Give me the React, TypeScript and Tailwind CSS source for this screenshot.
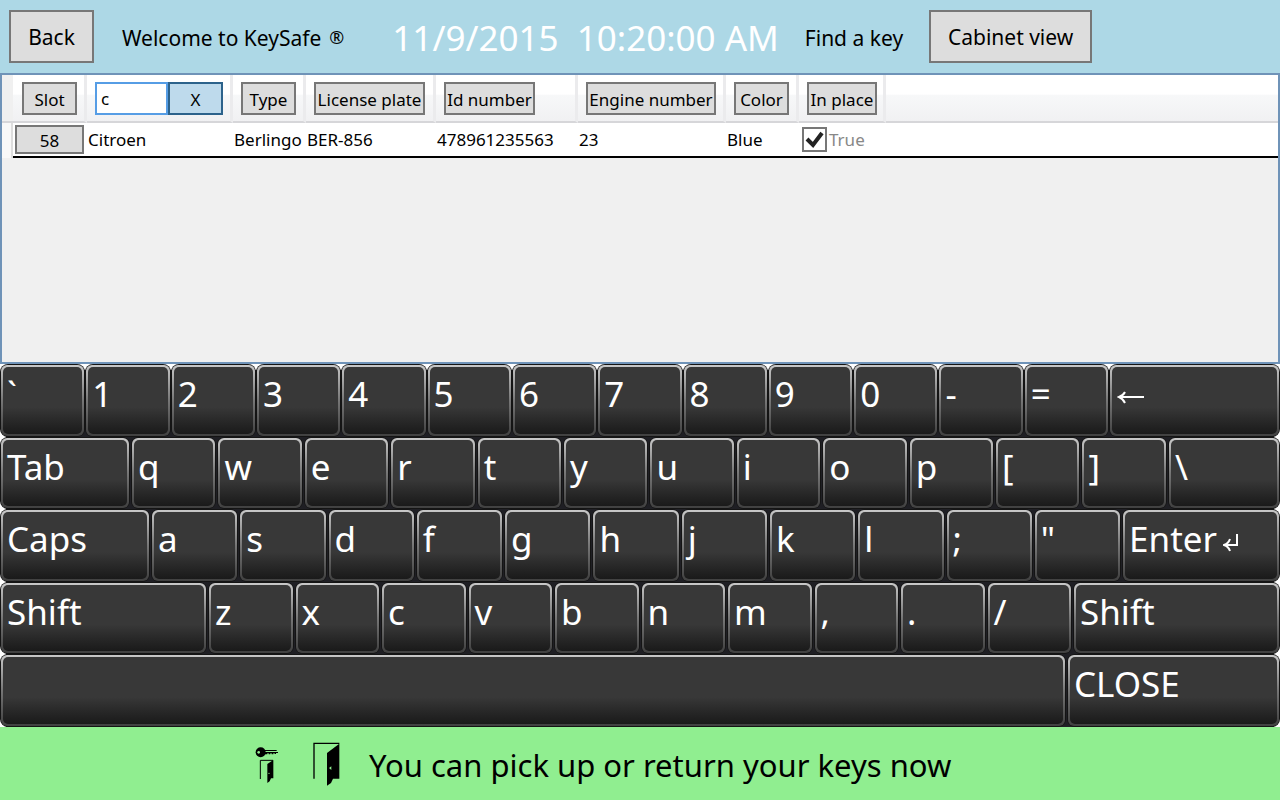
import { useState } from 'react';
import clsx from 'clsx';

const columns = [
	{ title: 'Type', width: 'w-[73px]', button: 'w-[55px]' },
	{ title: 'License plate', width: 'w-[130px]', button: 'w-[111px]' },
	{ title: 'Id number', width: 'w-[142px]', button: 'w-[91px]' },
	{ title: 'Engine number', width: 'w-[148px]', button: 'w-[130px]' },
	{ title: 'Color', width: 'w-[73px]', button: 'w-[55px]' },
	{ title: 'In place', width: 'w-[87px]', button: 'w-[70px]' },
];

const keys = [
	{
		slot: 58,
		name: 'Citroen',
		type: 'Berlingo',
		plate: 'BER-856',
		id: '478961235563',
		engine: '23',
		color: 'Blue',
		inPlace: true,
	},
];

// each key is [label, relative width]
const keyboard: [string, number][][] = [
	[
		...[...'`1234567890-='].map((c): [string, number] => [c, 83.3]),
		['←', 169],
	],
	[
		['Tab', 128],
		...[...'qwertyuiop[]'].map((c): [string, number] => [c, 83.4]),
		['\\', 110],
	],
	[
		['Caps', 148],
		...[...'asdfghjkl;"'].map((c): [string, number] => [c, 85.3]),
		['Enter ↲', 156],
	],
	[
		['Shift', 205],
		...[...'zxcvbnm,./'].map((c): [string, number] => [c, 83.5]),
		['Shift', 205],
	],
	[
		[' ', 1064],
		['CLOSE', 211],
	],
];

const grayButton =
	'border-2 border-[#777] bg-[#ddd] pt-[3px] text-black flex items-center justify-center whitespace-nowrap';

function KeyLabel({ label }: { label: string }) {
	if (label === '←') {
		return (
			<span className="flex pt-6 pl-px">
				<svg viewBox="0 0 28 14" className="h-[14px] w-7" fill="none" stroke="white" strokeWidth="2">
					<path d="M27 6H3" />
					<path d="M8 1C6.500 4 4.500 5 2 6C4.500 7 6.500 9 8 12" />
				</svg>
			</span>
		);
	}
	if (label === 'Enter ↲') {
		return (
			<span className="flex">
				Enter
				<svg viewBox="0 0 16 20" className="mt-[21px] ml-1.5 h-5 w-4" fill="none" stroke="white" strokeWidth="2">
					<path d="M14 1V12H3" />
					<path d="M7 6C6 9 4 11 1 12C4 13 6 15 7 18" />
				</svg>
			</span>
		);
	}
	return <>{label}</>;
}

function Key({ label, size }: { label: string; size: number }) {
	return (
		<button
			type="button"
			aria-label={label === ' ' ? 'Space' : label}
			style={{ flexGrow: size }}
			className="min-w-0 basis-0 rounded-lg bg-[#141414] p-px"
		>
			<span className="block h-full rounded-md bg-linear-to-b from-[#c8c8c8] via-[#777] to-[#404040] p-[2px]">
				<span className="block h-full rounded-[5px] bg-linear-to-b from-[#383838] from-60% to-[#1a1a1a] pl-1 text-left text-[35px] leading-[53px] whitespace-nowrap text-white">
					<KeyLabel label={label} />
				</span>
			</span>
		</button>
	);
}

function KeyDoorIcon() {
	return (
		<svg viewBox="45 48 72 114" className="h-[38px] w-6">
			<circle cx="62" cy="67" r="15" />
			<circle cx="56" cy="67" r="4" fill="#90ee90" />
			<path d="M74 60H110V63H74ZM74 66H114V69H108V72H104V70H100V73H95V70H91V73H86V70H82V73H74Z" />
			<path d="M61 147V91H99" fill="none" stroke="black" strokeWidth="3" />
			<path d="M100 90L82 102V159L89 154L93 145H100Z" />
			<circle cx="87" cy="130" r="2" fill="#90ee90" />
		</svg>
	);
}

function DoorIcon() {
	return (
		<svg viewBox="218 34 81 132" className="h-11 w-[27px]">
			<path d="M221 144V38H297" fill="none" stroke="black" strokeWidth="4" />
			<path d="M297 39L260 67V165L272 157L278 144H297Z" />
			<path d="M273 107V118L266 112Z" fill="#90ee90" />
		</svg>
	);
}

export default function App() {
	const [filter, setFilter] = useState('c');
	const headCell =
		'h-12 border-r-3 border-[#ebebed] pt-px pl-2 text-left font-normal';

	return (
		<div className="flex min-h-screen flex-col bg-[#f0f0f0] font-['Noto_Sans','Open_Sans',sans-serif] text-black">
			<header className="flex h-[73px] items-center bg-[#add8e6] pl-[9px] text-[21px]">
				<button type="button" className={clsx(grayButton, 'h-[53px] w-[85px]')}>
					Back
				</button>
				<span className="ml-7 flex gap-2 pt-1 whitespace-nowrap">
					Welcome to KeySafe <span className="text-lg leading-7">®</span>
				</span>
				<time className="ml-12 pt-1 text-[35px] whitespace-pre text-white">
					11/9/2015  10:20:00 AM
				</time>
				<h1 className="ml-[26px] pt-1 whitespace-nowrap">Find a key</h1>
				<button type="button" className={clsx(grayButton, 'ml-[26px] h-[53px] w-[163px]')}>
					Cabinet view
				</button>
			</header>

			<main className="flex-1 border-2 border-[#6f93b8]">
				<table className="w-full table-fixed border-separate border-spacing-0 text-[17px]">
					<thead className="bg-linear-to-b from-white from-40% via-[#f7f8f9] via-42% to-[#f0f0f2]">
						<tr className="[&>th]:border-b-2 [&>th]:border-b-[#d6d6d9]">
							<th className="w-[11px] bg-[#f0f0f0]" />
							<th className={clsx(headCell, 'w-[74px]')}>
								<button type="button" className={clsx(grayButton, 'ml-px h-[33px] w-[55px]')}>
									Slot
								</button>
							</th>
							<th className={clsx(headCell, 'w-[146px]')}>
								<div className="flex">
									<input
										aria-label="Filter by name"
										value={filter}
										onChange={(e) => setFilter(e.target.value)}
										className="h-[33px] w-[73px] border-2 border-[#569de5] bg-white px-1 outline-none"
									/>
									<button
										type="button"
										onClick={() => setFilter('')}
										className="h-[33px] w-[55px] border-2 border-[#2c628b] bg-[#bedaec] pt-[3px]"
									>
										X
									</button>
								</div>
							</th>
							{columns.map((c) => (
								<th key={c.title} className={clsx(headCell, c.width)}>
									<button type="button" className={clsx(grayButton, 'h-[33px]', c.button)}>
										{c.title}
									</button>
								</th>
							))}
							<th />
						</tr>
					</thead>
					<tbody>
						{keys.map((k) => (
							<tr
								key={k.slot}
								className="bg-white [&>td]:h-[35px] [&>td]:border-b-2 [&>td]:border-black [&>td]:pl-px [&>td]:whitespace-nowrap"
							>
								<th className="border-r-2 border-[#ddd] bg-[#f8f8f8]" />
								<td>
									<button type="button" className={clsx(grayButton, 'ml-px h-[29px] w-[69px]')}>
										{k.slot}
									</button>
								</td>
								<td>{k.name}</td>
								<td>{k.type}</td>
								<td>{k.plate}</td>
								<td>{k.id}</td>
								<td>{k.engine}</td>
								<td>{k.color}</td>
								<td>
									<label className="flex items-center gap-[2px] pl-[2px] text-[#888]">
										<span className="relative h-[25px] w-[25px]">
											<input
												type="checkbox"
												checked={k.inPlace}
												readOnly
												className="block h-full w-full appearance-none border-2 border-[#777] bg-white"
											/>
											<svg
												viewBox="0 0 25 25"
												className="pointer-events-none absolute inset-0"
												fill="none"
												stroke="#222"
												strokeWidth="4"
											>
												<path d="M5 12L11 18L20 6" />
											</svg>
										</span>
										True
									</label>
								</td>
								<td />
							</tr>
						))}
					</tbody>
				</table>
			</main>

			<section
				aria-label="On-screen keyboard"
				className="flex h-[363px] flex-col bg-[linear-gradient(to_right,white_6px,transparent_6px,transparent_calc(100%-6px),white_calc(100%-6px)),linear-gradient(white_6px,#1f1f24_6px)]"
			>
				{keyboard.map((row, r) => (
					<div key={r} className={clsx('flex flex-1', r > 0 && 'gap-px')}>
						{row.map(([label, size], i) => (
							<Key key={i} label={label} size={size} />
						))}
					</div>
				))}
			</section>

			<footer className="flex h-[73px] items-center bg-[#90ee90] pl-[255px] text-[31px]">
				<span className="pt-[3px]">
					<KeyDoorIcon />
				</span>
				<span className="ml-[34px]">
					<DoorIcon />
				</span>
				<p className="ml-[29px] pt-1 whitespace-nowrap">You can pick up or return your keys now</p>
			</footer>
		</div>
	);
}
